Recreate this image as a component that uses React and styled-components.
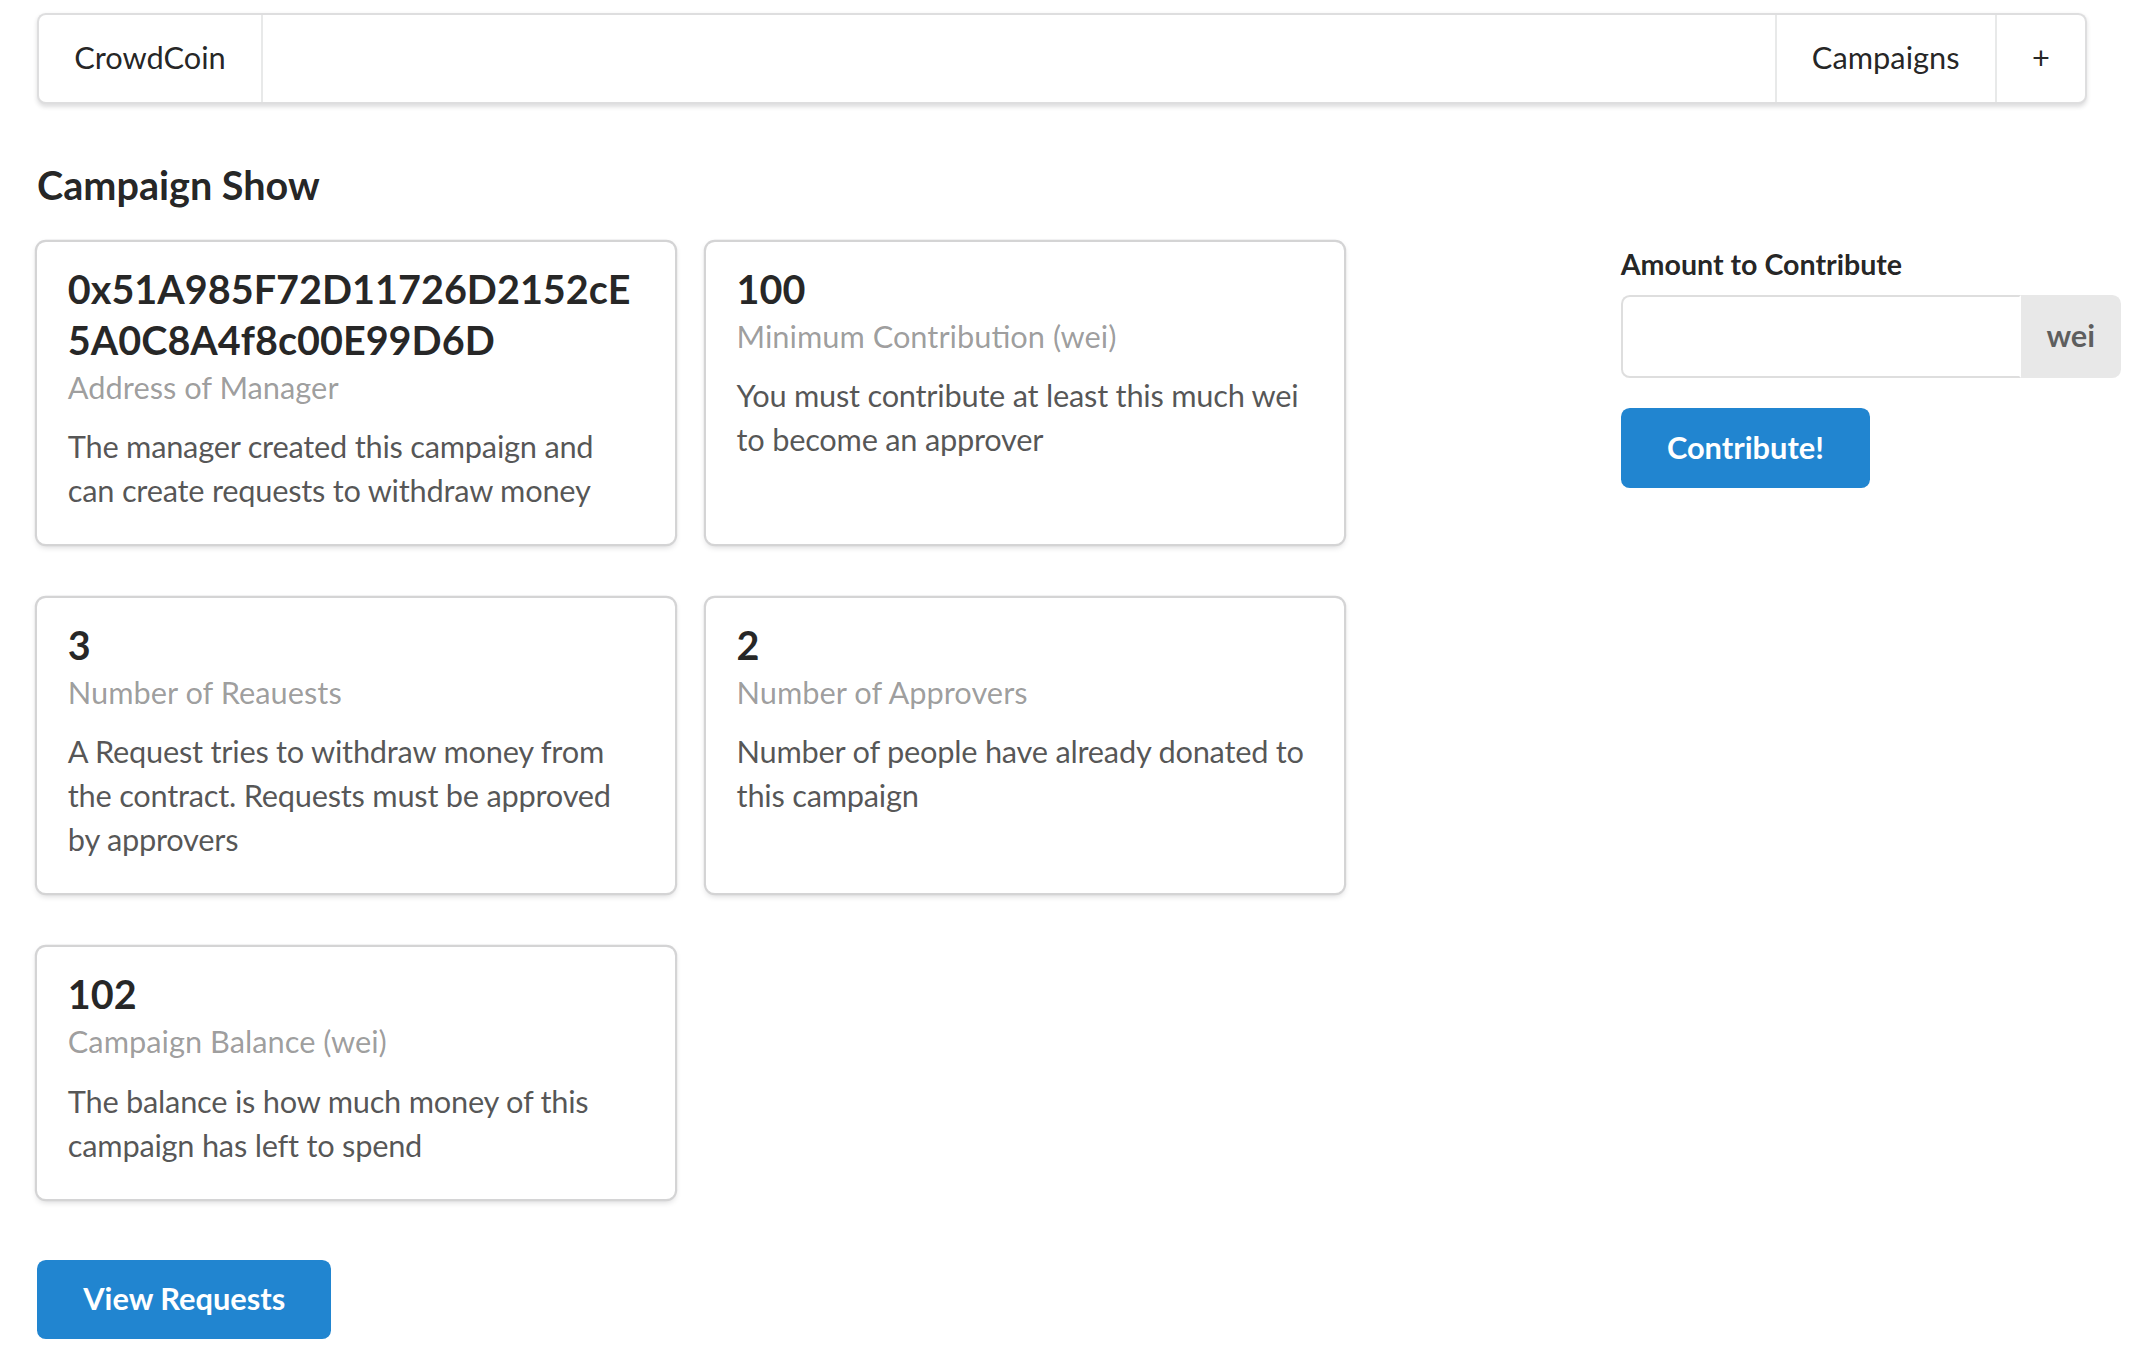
import React from 'react'
import styled, { createGlobalStyle } from 'styled-components'

const GlobalStyle = createGlobalStyle`
  *, *::before, *::after {
    box-sizing: border-box;
  }
  html, body {
    margin: 0;
    padding: 0;
    background: #fff;
  }
  body {
    font-family: Lato, 'Helvetica Neue', Arial, Helvetica, sans-serif;
    font-size: 30.8px;
    line-height: 1.4285em;
    color: rgba(0, 0, 0, 0.87);
  }
`

const Container = styled.div`
  width: 2050px;
  margin-left: 37px;
  padding-top: 13px;
`

const Menu = styled.nav`
  display: flex;
  min-height: 91px;
  background: #fff;
  border: 2.2px solid rgba(34, 36, 38, 0.15);
  border-radius: 8.8px;
  box-shadow: 0 2.2px 4.4px 0 rgba(34, 36, 38, 0.15);
`

const RightMenu = styled.div`
  display: flex;
  margin-left: auto;
`

const MenuItem = styled.a`
  display: flex;
  align-items: center;
  padding: 0 35.2px;
  font-size: 30.8px;
  line-height: 1;
  color: rgba(0, 0, 0, 0.87);
  text-decoration: none;
  cursor: pointer;
  border-${p => (p.$right ? 'left' : 'right')}: 2.2px solid rgba(34, 36, 38, 0.1);
`

const PageHeader = styled.h3`
  margin: 56px 0 0;
  font-size: 39.6px;
  font-weight: 700;
  line-height: 1.2857em;
  color: rgba(0, 0, 0, 0.87);
`

const Grid = styled.div`
  margin: 0 -30.8px;
`

const GridRow = styled.div`
  display: flex;
  align-items: flex-start;
  padding: 30.8px 0;
`

const Column = styled.div`
  width: ${p => (p.$width / 16) * 100}%;
  padding: 0 30.8px;
`

const Cards = styled.div`
  display: flex;
  flex-wrap: wrap;
  gap: 53.9px 30.8px;
`

const Card = styled.div`
  width: 638px;
  padding: 30.8px;
  background: #fff;
  border-radius: 8.8px;
  box-shadow: 0 2.2px 6.6px 0 #d4d4d5, 0 0 0 2.2px #d4d4d5;
`

const CardHeader = styled.div`
  margin-top: -8.5px;
  font-size: 39.6px;
  font-weight: 700;
  line-height: 1.2857em;
  color: rgba(0, 0, 0, 0.85);
  overflow-wrap: break-word;
`

const CardMeta = styled.div`
  color: rgba(0, 0, 0, 0.4);
`

const CardDescription = styled.div`
  margin-top: 15.4px;
  color: rgba(0, 0, 0, 0.68);
  letter-spacing: -0.25px;
`

const Form = styled.form`
  margin: 0;
`

const Field = styled.div`
  margin-bottom: 30.8px;
`

const FieldLabel = styled.label`
  display: block;
  margin: 0 0 8.8px;
  font-size: 28.6px;
  font-weight: 700;
  color: rgba(0, 0, 0, 0.87);
`

const LabeledInput = styled.div`
  display: inline-flex;
`

const Input = styled.input`
  width: 400px;
  margin: 0;
  padding: 20.9px 30.8px;
  font-family: inherit;
  font-size: 30.8px;
  line-height: 1.2143em;
  color: rgba(0, 0, 0, 0.87);
  background: #fff;
  border: 2.2px solid rgba(34, 36, 38, 0.15);
  border-right-color: transparent;
  border-radius: 8.8px 0 0 8.8px;
  outline: none;
`

const InputLabel = styled.div`
  display: flex;
  align-items: center;
  padding: 0 25.7px;
  font-size: 30.8px;
  font-weight: 700;
  line-height: 1;
  color: rgba(0, 0, 0, 0.6);
  background: #e8e8e8;
  border-radius: 0 8.8px 8.8px 0;
`

const Button = styled.button`
  padding: 24.2px 46.2px;
  font-family: Lato, 'Helvetica Neue', Arial, Helvetica, sans-serif;
  font-size: 30.8px;
  font-weight: 700;
  line-height: 1;
  color: #fff;
  background: #2185d0;
  border: none;
  border-radius: 8.8px;
  cursor: pointer;
`

const summary = [
  {
    header: '0x51A985F72D11726D2152cE5A0C8A4f8c00E99D6D',
    meta: 'Address of Manager',
    description: 'The manager created this campaign and can create requests to withdraw money',
  },
  {
    header: '100',
    meta: 'Minimum Contribution (wei)',
    description: 'You must contribute at least this much wei to become an approver',
  },
  {
    header: '3',
    meta: 'Number of Reauests',
    description: 'A Request tries to withdraw money from the contract. Requests must be approved by approvers',
  },
  {
    header: '2',
    meta: 'Number of Approvers',
    description: 'Number of people have already donated to this campaign',
  },
  {
    header: '102',
    meta: 'Campaign Balance (wei)',
    description: 'The balance is how much money of this campaign has left to spend',
  },
]

const App = () => {
  return (
    <>
      <GlobalStyle />
      <Container>
        <Menu>
          <MenuItem>CrowdCoin</MenuItem>
          <RightMenu>
            <MenuItem $right>Campaigns</MenuItem>
            <MenuItem $right>+</MenuItem>
          </RightMenu>
        </Menu>

        <PageHeader>Campaign Show</PageHeader>

        <Grid>
          <GridRow>
            <Column $width={12}>
              <Cards>
                {summary.map(item => (
                  <Card key={item.meta}>
                    <CardHeader>{item.header}</CardHeader>
                    <CardMeta>{item.meta}</CardMeta>
                    <CardDescription>{item.description}</CardDescription>
                  </Card>
                ))}
              </Cards>
            </Column>
            <Column $width={4}>
              <Form onSubmit={e => e.preventDefault()}>
                <Field>
                  <FieldLabel>Amount to Contribute</FieldLabel>
                  <LabeledInput>
                    <Input />
                    <InputLabel>wei</InputLabel>
                  </LabeledInput>
                </Field>
                <Button>Contribute!</Button>
              </Form>
            </Column>
          </GridRow>
          <GridRow>
            <Column $width={12}>
              <Button>View Requests</Button>
            </Column>
          </GridRow>
        </Grid>
      </Container>
    </>
  )
}

export default App
